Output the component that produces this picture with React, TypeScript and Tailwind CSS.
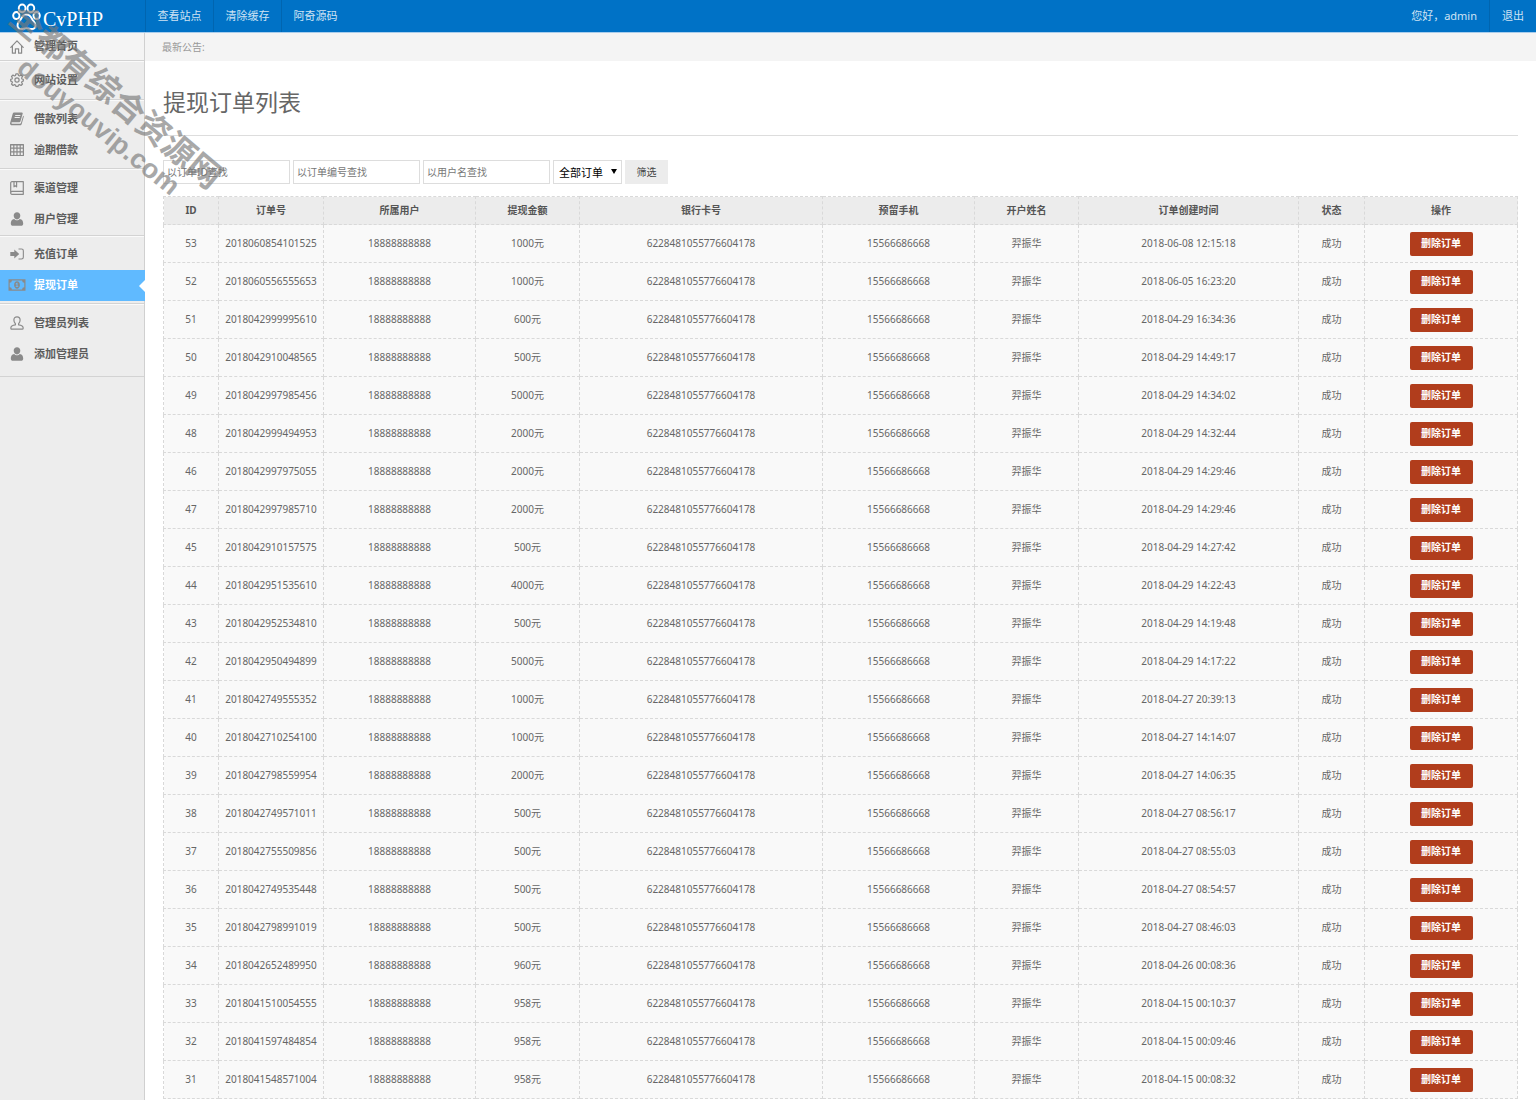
import React from 'react';

type IconProps = { className?: string };

const Svg: React.FC<{ children: React.ReactNode; fill?: boolean; wide?: boolean }> = ({ children, fill, wide }) => (
    <svg
        viewBox={wide ? '0 0 18 14' : '0 0 14 14'}
        className={wide ? 'h-[14px] w-[18px]' : 'h-[14px] w-[14px]'}
        fill={fill ? 'currentColor' : 'none'}
        stroke={fill ? 'none' : 'currentColor'}
        strokeWidth="1.2"
        strokeLinejoin="round"
        strokeLinecap="round"
        aria-hidden="true"
    >
        {children}
    </svg>
);

const HomeIcon = () => (
    <Svg>
        <path d="M.8 7.4 7 .9l6.2 6.5M2.4 6v7.2h3V8.8h3.2v4.4h3V6" />
    </Svg>
);

const GearIcon = () => (
    <Svg>
        <circle cx="7" cy="7" r="2.1" />
        <path d="M5.9.8h2.2l.4 1.7 1 .4 1.5-.9 1.5 1.5-.9 1.5.4 1 1.3.3v1.8l-1.3.4-.4 1 .9 1.5-1.5 1.5-1.5-.9-1 .4-.4 1.4H5.9l-.4-1.4-1-.4-1.5.9-1.5-1.5.9-1.5-.4-1L.7 8.1V6.3L2 6l.4-1-.9-1.5L3 2l1.5.9 1-.4z" />
    </Svg>
);

const BookIcon = () => (
    <Svg fill>
        <path
            fillRule="evenodd"
            d="M4.200.5h7.600c.7 0 1.100.5.900 1.100L10.500 9.300c-.2.7-.6 1-1.300 1H2.200c-.7 0-1 .4-.8 1 .1.300.4.500.8.500h7.700c.5 0 .9-.2 1.100-.8l2.100-7.300c.6.200.8.700.6 1.300l-2 7c-.2.800-.8 1.300-1.500 1.300H2C.7 13.300-.2 12.200.1 10.900L2.700 1.700C2.900.9 3.400.5 4.200.5zM5.300 3l-.2.900h5.200l.2-.9zm-.6 2.100-.2.900h5.200l.2-.9z"
        />
    </Svg>
);

const TableIcon = () => (
    <Svg>
        <path d="M.6 1.500h12.800v11H.6zM.6 2h12.800M.6 5.200h12.800M.6 8.800h12.800M3.800 2v10.500M7 2v10.500M10.200 2v10.500" />
    </Svg>
);

const NotebookIcon = () => (
    <Svg>
        <path d="M2 .7h11.300v12.600H2C1.200 13.300.7 12.800.7 12V2C.7 1.200 1.200.7 2 .7zM.8 11.400c0-.7.5-1.100 1.200-1.100h11.300M4 .8v5l1.300-1 1.300 1v-5" />
    </Svg>
);

const UserIcon = () => (
    <Svg fill>
        <path d="M7 .3c2 0 3.300 1.400 3.300 3.200 0 1.900-1.300 3.900-3.300 3.900S3.700 5.400 3.700 3.500C3.700 1.700 5 .3 7 .3zM4.200 6.900c.8.9 1.700 1.300 2.800 1.300s2-.4 2.800-1.300c2.500.4 3.400 2.200 3.400 4.500 0 1.500-.8 2.300-2.200 2.300H3c-1.400 0-2.200-.8-2.200-2.300 0-2.300.9-4.100 3.400-4.500z" />
    </Svg>
);

const SignInIcon = () => (
    <Svg fill>
        <path d="M.3 5h4V2.400L9.200 7l-4.900 4.600V9h-4z" />
        <path d="M8.500 1.500h3A2.400 2.400 0 0 1 13.900 4v6a2.400 2.400 0 0 1-2.400 2.500h-3v-1.100h3c.8 0 1.300-.6 1.300-1.400V4c0-.8-.5-1.400-1.300-1.400h-3z" />
    </Svg>
);

const MoneyIcon = () => (
    <Svg fill wide>
        <path
            fillRule="evenodd"
            d="M.5 1.200h17v11.600H.5zM3.900 2.500A2.200 2.200 0 0 1 1.700 4.700v4.600a2.200 2.200 0 0 1 2.200 2.200h10.200a2.200 2.200 0 0 1 2.200-2.200V4.700a2.200 2.200 0 0 1-2.200-2.200zM9 3.300c1.700 0 2.900 1.700 2.900 3.700S10.700 10.700 9 10.700 6.100 9 6.100 7 7.300 3.300 9 3.300zM8.700 4.800 7.500 5.900l.5.600.5-.4v2.200h-.8v.8h2.600v-.8h-.8V4.800z"
        />
    </Svg>
);

const UserLineIcon = () => (
    <Svg>
        <path d="M7 .8c1.900 0 3.100 1.300 3.100 3.200 0 1.600-.6 2.900-1.500 3.700v1.100c2.200.3 4.500 1 4.500 2.800v.8c0 .5-.3.800-.8.800H1.700c-.5 0-.8-.3-.8-.8v-.8c0-1.800 2.300-2.500 4.500-2.800V7.700C4.500 6.900 3.900 5.600 3.900 4 3.900 2.100 5.100.8 7 .8z" />
    </Svg>
);

const PawLogo: React.FC<IconProps> = ({ className }) => (
    <svg viewBox="0 0 30 28" className={className} fill="none" stroke="currentColor" strokeWidth="2" aria-hidden="true">
        <ellipse cx="10.500" cy="5" rx="3.500" ry="4" />
        <ellipse cx="19.500" cy="5" rx="3.500" ry="4" />
        <ellipse cx="4.500" cy="12.500" rx="3.300" ry="3.600" />
        <ellipse cx="25.500" cy="12.500" rx="3.300" ry="3.600" />
        <path d="M15 11.500c3.500 0 4.700 2.500 6 5 1 2 3.300 3 3.300 6 0 2.700-1.800 4-4 4-2 0-3.300-1-5.300-1s-3.300 1-5.300 1c-2.200 0-4-1.300-4-4 0-3 2.300-4 3.300-6 1.300-2.500 2.500-5 6-5z" />
    </svg>
);

const menuGroups = [
    {
        spacing: 'py-[3px]',
        items: [{ label: '网站设置', icon: GearIcon }],
    },
    {
        spacing: 'pt-[3px] pb-0.5',
        items: [
            { label: '借款列表', icon: BookIcon },
            { label: '逾期借款', icon: TableIcon },
        ],
    },
    {
        spacing: 'pt-[3px]',
        items: [
            { label: '渠道管理', icon: NotebookIcon },
            { label: '用户管理', icon: UserIcon },
        ],
    },
    {
        spacing: 'py-0.5',
        items: [
            { label: '充值订单', icon: SignInIcon },
            { label: '提现订单', icon: MoneyIcon, active: true },
        ],
    },
    {
        spacing: 'pt-[3px] pb-1.5',
        items: [
            { label: '管理员列表', icon: UserLineIcon },
            { label: '添加管理员', icon: UserIcon },
        ],
    },
];

const orders = [
    ['53', '2018060854101525', '1000', '2018-06-08 12:15:18'],
    ['52', '2018060556555653', '1000', '2018-06-05 16:23:20'],
    ['51', '2018042999995610', '600', '2018-04-29 16:34:36'],
    ['50', '2018042910048565', '500', '2018-04-29 14:49:17'],
    ['49', '2018042997985456', '5000', '2018-04-29 14:34:02'],
    ['48', '2018042999494953', '2000', '2018-04-29 14:32:44'],
    ['46', '2018042997975055', '2000', '2018-04-29 14:29:46'],
    ['47', '2018042997985710', '2000', '2018-04-29 14:29:46'],
    ['45', '2018042910157575', '500', '2018-04-29 14:27:42'],
    ['44', '2018042951535610', '4000', '2018-04-29 14:22:43'],
    ['43', '2018042952534810', '500', '2018-04-29 14:19:48'],
    ['42', '2018042950494899', '5000', '2018-04-29 14:17:22'],
    ['41', '2018042749555352', '1000', '2018-04-27 20:39:13'],
    ['40', '2018042710254100', '1000', '2018-04-27 14:14:07'],
    ['39', '2018042798559954', '2000', '2018-04-27 14:06:35'],
    ['38', '2018042749571011', '500', '2018-04-27 08:56:17'],
    ['37', '2018042755509856', '500', '2018-04-27 08:55:03'],
    ['36', '2018042749535448', '500', '2018-04-27 08:54:57'],
    ['35', '2018042798991019', '500', '2018-04-27 08:46:03'],
    ['34', '2018042652489950', '960', '2018-04-26 00:08:36'],
    ['33', '2018041510054555', '958', '2018-04-15 00:10:37'],
    ['32', '2018041597484854', '958', '2018-04-15 00:09:46'],
    ['31', '2018041548571004', '958', '2018-04-15 00:08:32'],
];

const columns = [
    { title: 'ID', width: 'w-[55px]' },
    { title: '订单号', width: 'w-[105px]' },
    { title: '所属用户', width: 'w-[152px]' },
    { title: '提现金额', width: 'w-[104px]' },
    { title: '银行卡号', width: 'w-[243px]' },
    { title: '预留手机', width: 'w-[152px]' },
    { title: '开户姓名', width: 'w-[104px]' },
    { title: '订单创建时间', width: 'w-[220px]' },
    { title: '状态', width: 'w-[66px]' },
    { title: '操作', width: 'w-[153px]' },
];

const searchFields = ['以订单ID查找', '以订单编号查找', '以用户名查找'];

const Header = () => (
    <header className="flex h-[33px] items-stretch border-b border-[#a9cdec] bg-[#0072c6] text-[11px] text-[#cfe3f4]">
        <a href="#" className="flex w-[145px] items-center pt-0.5 pl-3 text-white" aria-label="CvPHP">
            <PawLogo className="h-[28px] w-[29px]" />
            <span className="ml-[2px] pt-1 font-['Liberation_Serif',serif] text-[20px] leading-6">CvPHP</span>
        </a>
        <nav className="flex">
            {['查看站点', '清除缓存', '阿奇源码'].map((label) => (
                <a
                    key={label}
                    href="#"
                    className="flex w-[68px] items-center justify-center border-l border-[#0065b0]"
                >
                    {label}
                </a>
            ))}
        </nav>
        <div className="ml-auto flex">
            <span className="flex items-center px-3">您好，admin</span>
            <a href="#" className="flex items-center border-l border-[#0065b0] px-3">退出</a>
        </div>
    </header>
);

const Sidebar = () => (
    <aside className="w-[145px] shrink-0 border-r border-[#d0d0d0] bg-[#ededed] text-[11px] font-bold text-[#5c5c5c]">
        <a href="#" className="flex h-7 items-center border-b border-[#d3d3d3] bg-[#f4f4f4]">
            <span className="flex w-[34px] justify-center text-[#8a8a8a]"><HomeIcon /></span>
            管理首页
        </a>
        {menuGroups.map(({ spacing, items }, i) => (
            <ul key={i} className={`border-t border-b border-t-[#fafafa] border-b-[#d3d3d3] ${spacing}`}>
                {items.map(({ label, icon: Icon, ...item }) => {
                    const active = 'active' in item;
                    return (
                        <li key={label}>
                            <a
                                href="#"
                                className={`relative flex h-[31px] items-center ${active ? '-mr-px bg-[#60baff] text-white' : ''}`}
                            >
                                <span className="flex w-[34px] justify-center pb-0.5 text-[#8a8a8a]"><Icon /></span>
                                {label}
                                {active && (
                                    <span className="absolute right-0 border-y-[6px] border-r-[6px] border-y-transparent border-r-white" />
                                )}
                            </a>
                        </li>
                    );
                })}
            </ul>
        ))}
    </aside>
);

const FilterBar = () => (
    <form className="mt-6 flex items-center gap-[3px]" onSubmit={(e) => e.preventDefault()}>
        {searchFields.map((placeholder) => (
            <input
                key={placeholder}
                type="text"
                aria-label={placeholder}
                placeholder={placeholder}
                className="h-6 w-[127px] border border-[#dddddd] bg-white px-[3px] text-[10px] placeholder:text-[#777]"
            />
        ))}
        <div className="relative">
            <select aria-label="订单状态" className="block h-6 w-[69px] appearance-none border border-[#dddddd] bg-white pt-0.5 pl-[5px] text-[11px] text-black">
                <option>全部订单</option>
            </select>
            <span className="pointer-events-none absolute top-[9px] right-[5px] border-x-[3px] border-t-[5px] border-x-transparent border-t-black" />
        </div>
        <button type="submit" className="h-6 w-[43px] bg-[#ececec] text-[10px] text-[#444]">筛选</button>
    </form>
);

const OrderTable = () => (
    <table className="mt-3 w-full table-fixed border-collapse text-center text-[10px] text-[#666]">
        <thead>
            <tr className="h-7 bg-[#ececec] text-[#555]">
                {columns.map((col) => (
                    <th key={col.title} className={`border border-dashed border-[#d9d9d9] p-0 font-bold ${col.width}`}>
                        {col.title}
                    </th>
                ))}
            </tr>
        </thead>
        <tbody className="bg-[#f9f9f9]">
            {orders.map(([id, orderNo, amount, time]) => (
                <tr key={id} className="h-[38px]">
                    {[id, orderNo, '18888888888', `${amount}元`, '6228481055776604178', '15566686668', '羿振华', time, '成功'].map((cell, i) => (
                        <td key={i} className="border border-dashed border-[#d9d9d9] p-0">{cell}</td>
                    ))}
                    <td className="border border-dashed border-[#d9d9d9] p-0">
                        <button type="button" className="mx-auto block h-6 w-[63px] rounded-[2px] bg-[#b13d1c] font-bold text-white">
                            删除订单
                        </button>
                    </td>
                </tr>
            ))}
        </tbody>
    </table>
);

const Watermark = () => (
    <div className="pointer-events-none absolute top-0 left-0 font-bold whitespace-nowrap text-[#7a7a7a] opacity-65">
        <div className="absolute top-[1px] left-[24px] origin-top-left rotate-[40deg] text-[33px] leading-7">全都有综合资源网</div>
        <div className="absolute top-[53px] left-[30px] origin-top-left rotate-[39deg] font-['Liberation_Sans',sans-serif] text-[27px] leading-7">douyouvip.com</div>
    </div>
);

export default function App() {
    return (
        <div className="relative flex min-h-screen flex-col bg-white font-['Noto_Sans','Noto_Sans_CJK_SC',sans-serif]">
            <Header />
            <div className="flex flex-1">
                <Sidebar />
                <main className="min-w-0 flex-1">
                    <div className="flex h-7 items-center bg-[#f4f4f4] pl-[17px] text-[10px] text-[#999]">最新公告:</div>
                    <div className="px-[18px]">
                        <h1 className="border-b border-[#dddddd] pt-6 pb-4 text-[23px] leading-[34px] text-[#666]">提现订单列表</h1>
                        <FilterBar />
                        <OrderTable />
                    </div>
                </main>
            </div>
            <Watermark />
        </div>
    );
}
